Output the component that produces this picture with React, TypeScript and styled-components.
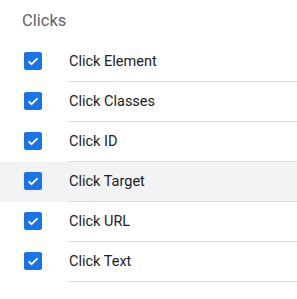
import styled, { createGlobalStyle } from "styled-components"

const GlobalStyle = createGlobalStyle`
body{
  margin: 0;
  background: #fff;
  font-family: Roboto, "Liberation Sans", sans-serif;
}
`

const items = ["Click Element", "Click Classes", "Click ID", "Click Target", "Click URL", "Click Text"]

const App = () => {
  return (
    <>
      <GlobalStyle />
      <Panel>
        <Title>Clicks</Title>
        <List>
          {items.map((name) => (
            <Row key={name} hovered={name === "Click Target"}>
              <BoxCell>
                <Box>
                  <svg width="14" height="14" viewBox="0 0 24 24">
                    <path d="M4.5 12.5l5 5L20 7" fill="none" stroke="#fff" strokeWidth="3" />
                  </svg>
                </Box>
              </BoxCell>
              <Label>{name}</Label>
            </Row>
          ))}
        </List>
      </Panel>
    </>
  )
}

export default App

const Panel = styled.div`
width: 297px;
height: 299px;
overflow: hidden;
`

const Title = styled.div`
height: 42px;
box-sizing: border-box;
padding: 11px 0 0 22px;
font-size: 16.5px;
line-height: 20px;
color: #5f6368;
`

const List = styled.div`
display: flex;
flex-direction: column;
`

const Row = styled.div<{ hovered?: boolean }>`
display: flex;
height: 40px;
background-color: ${(p) => (p.hovered ? "#f1f3f4" : "transparent")};
`

const BoxCell = styled.div`
width: 68px;
display: flex;
align-items: center;
padding: 0 0 2px 24px;
box-sizing: border-box;
`

const Box = styled.div`
width: 18px;
height: 18px;
border-radius: 2px;
background-color: #1a73e8;
display: flex;
align-items: center;
justify-content: center;
`

const Label = styled.div`
flex: 1;
display: flex;
align-items: center;
padding-left: 1px;
border-bottom: 1px solid #dadce0;
font-size: 14.5px;
color: #202124;
`
